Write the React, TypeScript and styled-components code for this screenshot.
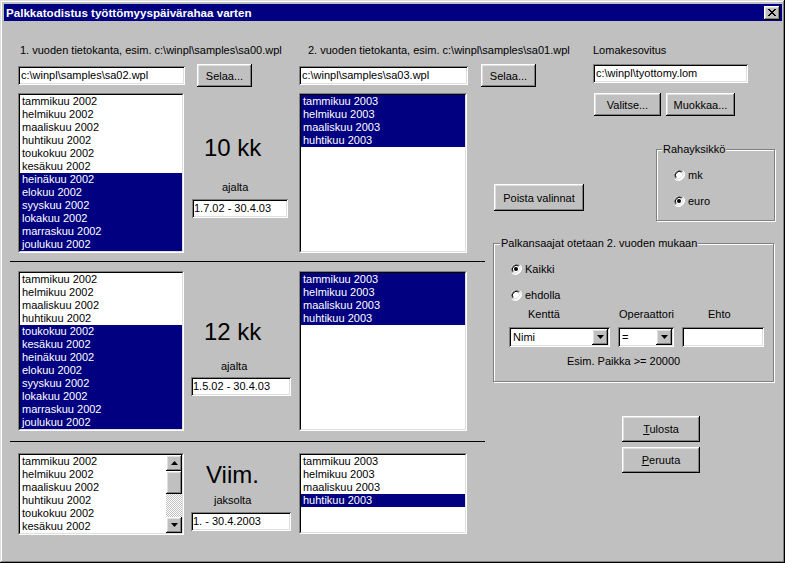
import React from 'react';
import styled, { createGlobalStyle } from 'styled-components';

const GlobalStyle = createGlobalStyle`
  html, body {
    margin: 0;
    padding: 0;
    background: #c0c0c0;
  }
  body {
    font-family: "Liberation Sans", Arial, sans-serif;
    font-size: 11px;
    color: #000;
  }
`;

const months = [
  'tammikuu', 'helmikuu', 'maaliskuu', 'huhtikuu', 'toukokuu', 'kesäkuu',
  'heinäkuu', 'elokuu', 'syyskuu', 'lokakuu', 'marraskuu', 'joulukuu',
];
const year2002 = months.map(m => `${m} 2002`);
const year2003 = months.slice(0, 4).map(m => `${m} 2003`);

type Section = {
  left: string[];
  leftSelected: (i: number) => boolean;
  right: string[];
  rightSelected: (i: number) => boolean;
  scroll?: boolean;
  listHeight: number;
  big: string;
  bigIndent: number;
  bigTop: number;
  label: string;
  labelIndent: number;
  labelGap: number;
  date: string;
  dateIndent: number;
  dateWidth: number;
  dateGap: number;
};

const sections: Section[] = [
  {
    left: year2002, leftSelected: i => i >= 6,
    right: year2003, rightSelected: () => true,
    listHeight: 160,
    big: '10 kk', bigIndent: 20, bigTop: 41,
    label: 'ajalta', labelIndent: 38, labelGap: 19,
    date: '1.7.02 - 30.4.03', dateIndent: 8, dateWidth: 96, dateGap: 5,
  },
  {
    left: year2002, leftSelected: i => i >= 4,
    right: year2003, rightSelected: () => true,
    listHeight: 160,
    big: '12 kk', bigIndent: 20, bigTop: 47,
    label: 'ajalta', labelIndent: 37, labelGap: 14,
    date: '1.5.02 - 30.4.03', dateIndent: 7, dateWidth: 100, dateGap: 4,
  },
  {
    left: year2002.slice(0, 6), leftSelected: () => false,
    right: year2003, rightSelected: i => i === 3,
    scroll: true,
    listHeight: 82,
    big: 'Viim.', bigIndent: 22, bigTop: 8,
    label: 'jaksolta', labelIndent: 30, labelGap: 5,
    date: '1. - 30.4.2003', dateIndent: 7, dateWidth: 100, dateGap: 5,
  },
];

// win95 bevels
const raised = `
  box-shadow: inset -1px -1px #000, inset 1px 1px #fff,
    inset -2px -2px #808080, inset 2px 2px #dfdfdf;
`;
const sunken = `
  box-shadow: inset 1px 1px #808080, inset -1px -1px #fff,
    inset 2px 2px #000, inset -2px -2px #dfdfdf;
`;

const Window = styled.div`
  width: 785px;
  height: 563px;
  box-sizing: border-box;
  padding: 4px 3px 3px 4px;
  background: #c0c0c0;
  box-shadow: inset -1px -1px #000, inset 1px 1px #dfdfdf,
    inset -2px -2px #808080, inset 2px 2px #fff;
  display: flex;
  flex-direction: column;
`;

const TitleBar = styled.div`
  height: 17px;
  background: #000080;
  color: #fff;
  font-weight: bold;
  font-size: 11.6px;
  display: flex;
  align-items: center;
  justify-content: space-between;
  padding: 0 2px;
`;

const CloseButton = styled.div`
  width: 16px;
  height: 14px;
  background: #c0c0c0;
  ${raised}
  display: flex;
  align-items: center;
  justify-content: center;
`;

const Client = styled.div`
  padding: 23px 0 0 6px;
  display: flex;
  flex-direction: column;
`;

const Header = styled.div`
  display: flex;
`;

const HeaderCol = styled.div<{ $width?: number; $offset?: number }>`
  width: ${({ $width }) => ($width ? `${$width}px` : 'auto')};
  margin-left: ${({ $offset }) => $offset ?? 0}px;
  display: flex;
  flex-direction: column;
`;

const Caption = styled.div<{ $indent?: number }>`
  height: 13px;
  line-height: 13px;
  padding-left: ${({ $indent }) => $indent ?? 0}px;
  white-space: nowrap;
  margin-bottom: 7px;
`;

const FieldRow = styled.div<{ $gap: number }>`
  display: flex;
  align-items: center;
  gap: ${({ $gap }) => $gap}px;
`;

const TextBox = styled.div<{ $width: number }>`
  width: ${({ $width }) => $width}px;
  height: 19px;
  box-sizing: border-box;
  background: #fff;
  ${sunken}
  padding-left: 3px;
  line-height: 19px;
  white-space: nowrap;
  overflow: hidden;
`;

const Button = styled.div<{ $width: number; $height: number }>`
  width: ${({ $width }) => $width}px;
  height: ${({ $height }) => $height}px;
  background: #c0c0c0;
  ${raised}
  display: flex;
  align-items: center;
  justify-content: center;
  white-space: nowrap;
`;

const Body = styled.div`
  display: flex;
  margin-top: 6px;
`;

const LeftCol = styled.div`
  width: 475px;
  display: flex;
  flex-direction: column;
`;

const SectionRow = styled.div`
  display: flex;
  align-items: flex-start;
  padding-left: 8px;
`;

const Divider = styled.div<{ $before: number; $after: number }>`
  height: 1px;
  background: #000;
  margin: ${({ $before, $after }) => `${$before}px 0 ${$after}px`};
`;

const ListOuter = styled.div<{ $width: number; $height: number }>`
  width: ${({ $width }) => $width}px;
  height: ${({ $height }) => $height}px;
  box-sizing: border-box;
  border: 1px solid;
  border-color: #808080 #fff #fff #808080;
`;

const ListInner = styled.div`
  height: 100%;
  box-sizing: border-box;
  border: 1px solid;
  border-color: #000 #dfdfdf #dfdfdf #000;
  background: #fff;
  display: flex;
  overflow: hidden;
`;

const ListItems = styled.div`
  flex: 1;
  min-width: 0;
`;

const ListItem = styled.div<{ $selected: boolean }>`
  height: 13px;
  line-height: 13px;
  padding-left: 2px;
  white-space: nowrap;
  background: ${({ $selected }) => ($selected ? '#000080' : 'transparent')};
  color: ${({ $selected }) => ($selected ? '#fff' : '#000')};
`;

const ScrollBar = styled.div`
  width: 16px;
  display: flex;
  flex-direction: column;
`;

const ScrollButton = styled.div<{ $height: number }>`
  height: ${({ $height }) => $height}px;
  background: #c0c0c0;
  ${raised}
  display: flex;
  align-items: center;
  justify-content: center;
`;

const ScrollTrack = styled.div`
  flex: 1;
  background-image: conic-gradient(#fff 25%, #c0c0c0 0 50%, #fff 0 75%, #c0c0c0 0);
  background-size: 2px 2px;
`;

const Middle = styled.div`
  width: 115px;
  display: flex;
  flex-direction: column;
`;

const BigText = styled.div<{ $indent: number; $top: number }>`
  margin: ${({ $top }) => $top}px 0 0 ${({ $indent }) => $indent}px;
  height: 28px;
  line-height: 28px;
  font-size: 24px;
  white-space: nowrap;
`;

const SmallLabel = styled.div<{ $indent: number; $top: number }>`
  margin: ${({ $top }) => $top}px 0 0 ${({ $indent }) => $indent}px;
  height: 13px;
  line-height: 13px;
`;

const DateBox = styled(TextBox)<{ $indent: number; $top: number }>`
  margin: ${({ $top }) => $top}px 0 0 ${({ $indent }) => $indent}px;
  padding-left: 2px;
`;

const RightPanel = styled.div`
  width: 282px;
  margin-left: 8px;
  display: flex;
  flex-direction: column;
`;

const FormButtons = styled.div`
  display: flex;
  gap: 5px;
  margin-left: 101px;
`;

const MiddleRow = styled.div`
  display: flex;
  align-items: flex-start;
  margin-top: 27px;
`;

const GroupBox = styled.fieldset<{ $width: number; $height: number; $left?: number }>`
  width: ${({ $width }) => $width}px;
  height: ${({ $height }) => $height}px;
  box-sizing: border-box;
  margin: 0 0 0 ${({ $left }) => ($left === undefined ? 'auto' : `${$left}px`)};
  padding: 0 0 0 16px;
  min-width: 0;
  border: 1px solid #808080;
  box-shadow: inset 1px 1px #fff, 1px 1px #fff;
  display: flex;
  flex-direction: column;
`;

// legend sits from the content edge, so pull it back over the padding
const Legend = styled.legend<{ $indent: number }>`
  margin-left: ${({ $indent }) => $indent - 16}px;
  padding: 0 1px;
  line-height: 13px;
  background: #c0c0c0;
`;

const RadioRow = styled.div<{ $top: number }>`
  display: flex;
  align-items: center;
  gap: 3px;
  height: 13px;
  margin-top: ${({ $top }) => $top}px;
`;

const ConditionGrid = styled.div`
  display: grid;
  grid-template-columns: 101px 56px 82px;
  column-gap: 8px;
  row-gap: 6px;
  margin: 7px 0 0 -1px;
`;

const ColLabel = styled.div<{ $indent: number }>`
  height: 13px;
  line-height: 13px;
  padding-left: ${({ $indent }) => $indent}px;
  white-space: nowrap;
`;

const Combo = styled.div`
  height: 20px;
  box-sizing: border-box;
  background: #fff;
  ${sunken}
  display: flex;
  align-items: stretch;
  padding: 2px;
`;

const ComboText = styled.div`
  flex: 1;
  line-height: 16px;
  padding-left: 2px;
`;

const ComboButton = styled.div`
  width: 16px;
  background: #c0c0c0;
  ${raised}
  display: flex;
  align-items: center;
  justify-content: center;
`;

const Hint = styled.div`
  margin: 8px 0 0 57px;
  line-height: 13px;
`;

const ActionButtons = styled.div`
  display: flex;
  flex-direction: column;
  gap: 5px;
  margin: 34px 0 0 129px;
`;

const Arrow = ({ down }: { down?: boolean }) => (
  <svg width="7" height="4" viewBox="0 0 7 4">
    <polygon points={down ? '0,0 7,0 3.5,4' : '0,4 7,4 3.5,0'} fill="#000" />
  </svg>
);

const CloseGlyph = () => (
  <svg width="8" height="7" viewBox="0 0 8 7" shapeRendering="crispEdges">
    <path
      d="M0 0h2v1h-2zM6 0h2v1h-2zM1 1h2v1h-2zM5 1h2v1h-2zM2 2h4v1h-4zM3 3h2v1h-2zM2 4h4v1h-4zM1 5h2v1h-2zM5 5h2v1h-2zM0 6h2v1h-2zM6 6h2v1h-2z"
      fill="#000"
    />
  </svg>
);

const Radio = ({ checked }: { checked?: boolean }) => (
  <svg width="12" height="12" viewBox="0 0 12 12">
    <circle cx="6" cy="6" r="5" fill="#fff" />
    <path d="M1.8 10.2 A6 6 0 0 0 10.2 1.8" fill="none" stroke="#fff" strokeWidth="1" />
    <path d="M9.5 2.5 A5 5 0 0 0 2.5 9.5" fill="none" stroke="#808080" strokeWidth="1" />
    <path d="M8.8 3.2 A4 4 0 0 0 3.2 8.8" fill="none" stroke="#000" strokeWidth="1" />
    <path d="M3.2 8.8 A4 4 0 0 0 8.8 3.2" fill="none" stroke="#dfdfdf" strokeWidth="1" />
    {checked && <circle cx="6" cy="6" r="2" fill="#000" />}
  </svg>
);

function ListBox(props: {
  items: string[];
  selected: (i: number) => boolean;
  width: number;
  height: number;
  scroll?: boolean;
}) {
  const { items, selected, width, height, scroll } = props;
  return (
    <ListOuter $width={width} $height={height}>
      <ListInner>
        <ListItems>
          {items.map((item, i) => (
            <ListItem key={item} $selected={selected(i)}>
              {item}
            </ListItem>
          ))}
        </ListItems>
        {scroll && (
          <ScrollBar>
            <ScrollButton $height={16}>
              <Arrow />
            </ScrollButton>
            <ScrollButton $height={23} />
            <ScrollTrack />
            <ScrollButton $height={16}>
              <Arrow down />
            </ScrollButton>
          </ScrollBar>
        )}
      </ListInner>
    </ListOuter>
  );
}

function PeriodSection({ s }: { s: Section }) {
  return (
    <SectionRow>
      <ListBox
        items={s.left}
        selected={s.leftSelected}
        width={166}
        height={s.listHeight}
        scroll={s.scroll}
      />
      <Middle>
        <BigText $indent={s.bigIndent} $top={s.bigTop}>
          {s.big}
        </BigText>
        <SmallLabel $indent={s.labelIndent} $top={s.labelGap}>
          {s.label}
        </SmallLabel>
        <DateBox $width={s.dateWidth} $indent={s.dateIndent} $top={s.dateGap}>
          {s.date}
        </DateBox>
      </Middle>
      <ListBox
        items={s.right}
        selected={s.rightSelected}
        width={168}
        height={s.scroll ? 81 : s.listHeight}
      />
    </SectionRow>
  );
}

export default function App() {
  return (
    <>
      <GlobalStyle />
      <Window>
        <TitleBar>
          <span>Palkkatodistus työttömyyspäivärahaa varten</span>
          <CloseButton>
            <CloseGlyph />
          </CloseButton>
        </TitleBar>
        <Client>
          <Header>
            <HeaderCol $width={281} $offset={8}>
              <Caption $indent={2}>1. vuoden tietokanta, esim. c:\winpl\samples\sa00.wpl</Caption>
              <FieldRow $gap={12}>
                <TextBox $width={167}>c:\winpl\samples\sa02.wpl</TextBox>
                <Button $width={55} $height={23}>Selaa...</Button>
              </FieldRow>
            </HeaderCol>
            <HeaderCol $width={294}>
              <Caption $indent={9}>2. vuoden tietokanta, esim. c:\winpl\samples\sa01.wpl</Caption>
              <FieldRow $gap={13}>
                <TextBox $width={169}>c:\winpl\samples\sa03.wpl</TextBox>
                <Button $width={55} $height={23}>Selaa...</Button>
              </FieldRow>
            </HeaderCol>
            <HeaderCol>
              <Caption>Lomakesovitus</Caption>
              <FieldRow $gap={0}>
                <TextBox $width={155}>c:\winpl\tyottomy.lom</TextBox>
              </FieldRow>
            </HeaderCol>
          </Header>
          <Body>
            <LeftCol>
              <PeriodSection s={sections[0]} />
              <Divider $before={8} $after={9} />
              <PeriodSection s={sections[1]} />
              <Divider $before={10} $after={11} />
              <PeriodSection s={sections[2]} />
            </LeftCol>
            <RightPanel>
              <FormButtons>
                <Button $width={67} $height={23}>Valitse...</Button>
                <Button $width={69} $height={23}>Muokkaa...</Button>
              </FormButtons>
              <MiddleRow>
                <Button $width={90} $height={27} style={{ marginTop: 41, marginLeft: 1 }}>
                  Poista valinnat
                </Button>
                <GroupBox $width={119} $height={78}>
                  <Legend $indent={5}>Rahayksikkö</Legend>
                  <RadioRow $top={12}>
                    <Radio />
                    <span>mk</span>
                  </RadioRow>
                  <RadioRow $top={13}>
                    <Radio checked />
                    <span>euro</span>
                  </RadioRow>
                </GroupBox>
              </MiddleRow>
              <GroupBox $width={281} $height={145} $left={0} style={{ marginTop: 16 }}>
                <Legend $indent={6}>Palkansaajat otetaan 2. vuoden mukaan</Legend>
                <RadioRow $top={12}>
                  <Radio checked />
                  <span>Kaikki</span>
                </RadioRow>
                <RadioRow $top={13}>
                  <Radio />
                  <span>ehdolla</span>
                </RadioRow>
                <ConditionGrid>
                  <ColLabel $indent={19}>Kenttä</ColLabel>
                  <ColLabel $indent={1}>Operaattori</ColLabel>
                  <ColLabel $indent={26}>Ehto</ColLabel>
                  <Combo>
                    <ComboText>Nimi</ComboText>
                    <ComboButton>
                      <Arrow down />
                    </ComboButton>
                  </Combo>
                  <Combo>
                    <ComboText>=</ComboText>
                    <ComboButton>
                      <Arrow down />
                    </ComboButton>
                  </Combo>
                  <Combo />
                </ConditionGrid>
                <Hint>Esim. Paikka &gt;= 20000</Hint>
              </GroupBox>
              <ActionButtons>
                <Button $width={78} $height={26}>
                  <span><u>T</u>ulosta</span>
                </Button>
                <Button $width={78} $height={26}>
                  <span><u>P</u>eruuta</span>
                </Button>
              </ActionButtons>
            </RightPanel>
          </Body>
        </Client>
      </Window>
    </>
  );
}
